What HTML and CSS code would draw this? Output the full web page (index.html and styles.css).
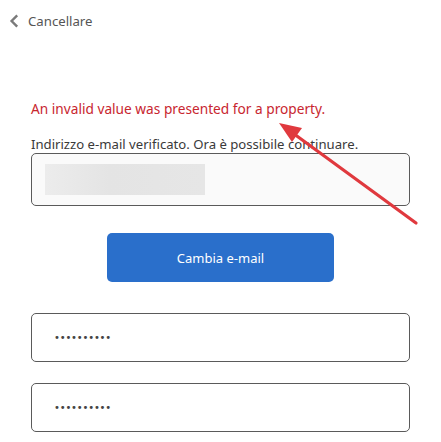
FILE: index.html
```html
<!DOCTYPE html>
<html lang="it">
<head>
<meta charset="utf-8">
<title>Cambia e-mail</title>
<link rel="stylesheet" href="styles.css">
</head>
<body>
<div class="page">
  <header class="topbar">
    <svg class="chev" width="10" height="14" viewBox="0 0 10 14"><path d="M8.2 1.3 L2.6 7 L8.2 12.7" fill="none" stroke="#7a7a7a" stroke-width="2.4"/></svg>
    <span class="cancel">Cancellare</span>
  </header>
  <main class="content">
    <p class="error">An invalid value was presented for a property.</p>
    <p class="info">Indirizzo e-mail verificato. Ora è possibile continuare.</p>
    <div class="field email"><div class="blur"></div></div>
    <div class="btnrow"><button class="primary">Cambia e-mail</button></div>
    <div class="field pw"><span class="dots">••••••••••</span></div>
    <div class="field pw"><span class="dots">••••••••••</span></div>
  </main>
  <svg class="arrow" width="441" height="442" viewBox="0 0 441 442">
    <line x1="416" y1="223" x2="290" y2="131" stroke="#e0393e" stroke-width="3.2" stroke-linecap="round"/>
    <polygon points="279,123 302,128 292,142" fill="#e0393e"/>
  </svg>
</div>
</body>
</html>
```
FILE: styles.css
```css
html, body { margin: 0; padding: 0; background: #fff; }
body { font-family: "Noto Sans", "Open Sans", sans-serif; color: #333; }
.page { position: relative; width: 441px; height: 442px; overflow: hidden; }
.topbar { display: flex; align-items: center; gap: 9px; padding: 13px 0 0 9px; height: 16px; }
.chev { display: block; }
.cancel { font-size: 13.2px; color: #555; }
.content { padding: 0 31px; display: flex; flex-direction: column; }
.error { margin: 71px 0 0; font-size: 13.7px; line-height: 18px; color: #c8262f; }
.info { margin: 17px 0 0; font-size: 13.15px; line-height: 18px; color: #3a3a3a; }
.field { box-sizing: border-box; border: 1px solid #5a5a5a; border-radius: 5px; background: #fff; display: flex; align-items: center; }
.email { margin-top: 0; height: 53px; background: #fafafa; padding-left: 13px; }
.blur { width: 160px; height: 31px; background: linear-gradient(90deg, #ececec, #e4e4e4 40%, #e6e6e6); }
.btnrow { display: flex; justify-content: center; margin-top: 27px; }
.primary { width: 227px; height: 49px; border: none; border-radius: 5px; background: #2a6fcb; color: #fff; font-family: "Noto Sans", sans-serif; font-size: 13px; }
.pw { height: 49px; padding-left: 22px; }
.pw:nth-of-type(3) { margin-top: 31px; }
.pw + .pw { margin-top: 21px; }
.dots { font-family: "DejaVu Sans", sans-serif; font-size: 10px; color: #444; letter-spacing: -0.2px; }
.arrow { position: absolute; left: 0; top: 0; pointer-events: none; }
```
